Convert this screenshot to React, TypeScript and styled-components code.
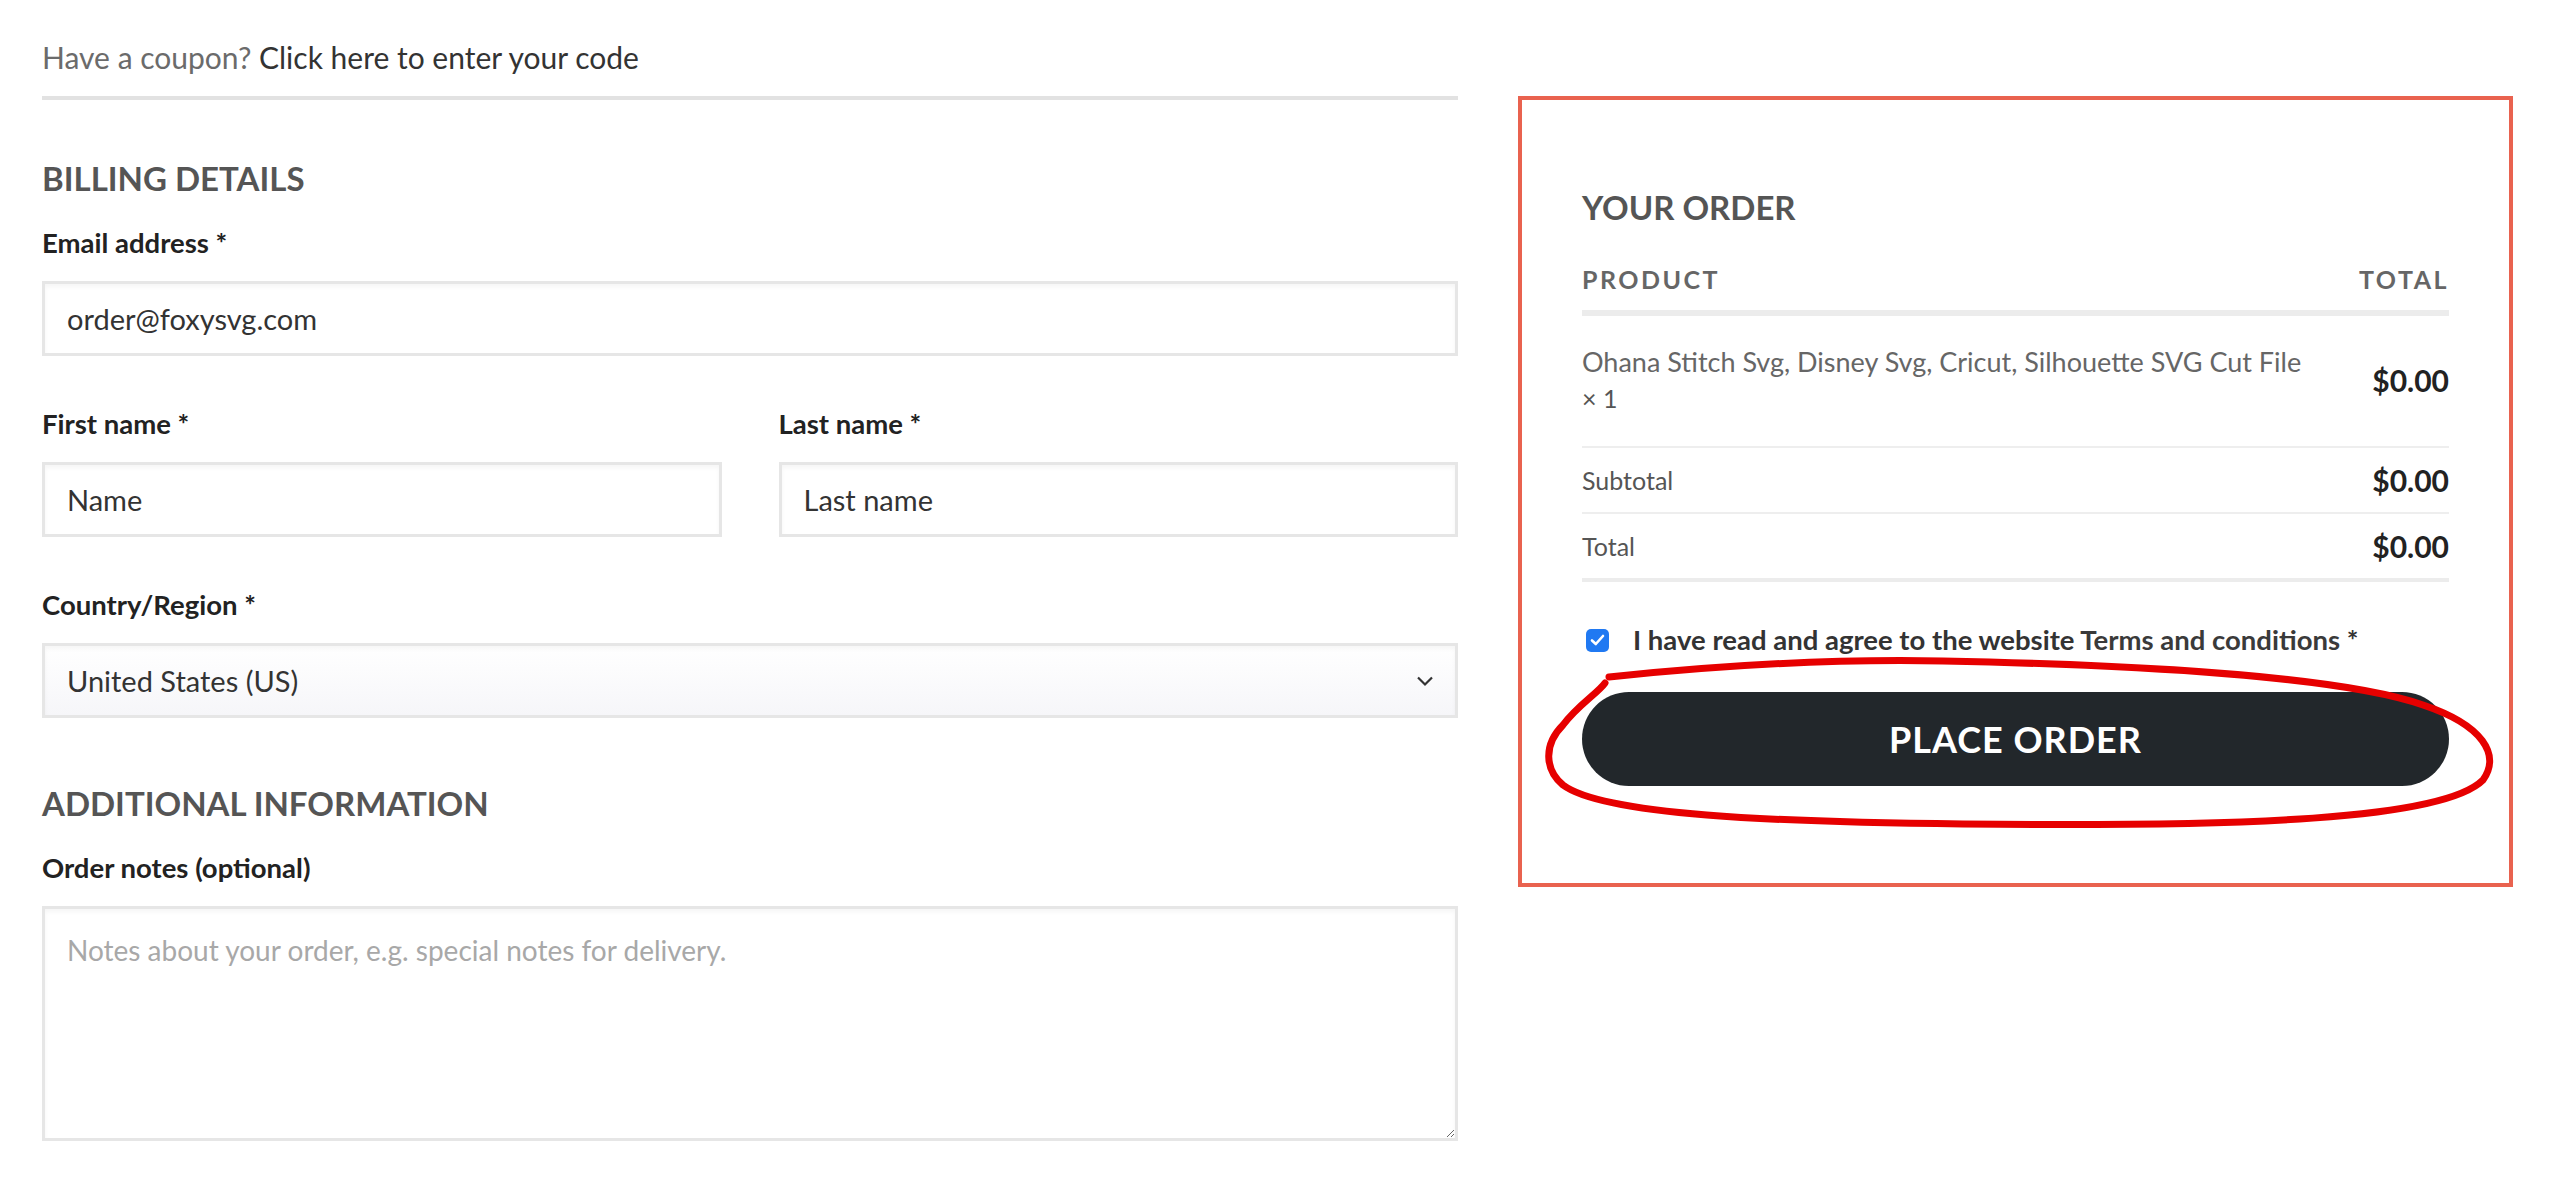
import React from "react";
import styled, { createGlobalStyle } from "styled-components";

const GlobalStyle = createGlobalStyle`
  * {
    box-sizing: border-box;
  }

  body {
    margin: 0;
    background: #fff;
    font-family: Lato, "Open Sans", sans-serif;
    color: #333;
  }
`;

const SPage = styled.div`
  display: flex;
  align-items: flex-start;
  gap: 60px;
  padding-left: 42px;
  width: 2560px;
`;

const SLeftColumn = styled.div`
  width: 1416px;
  display: flex;
  flex-direction: column;
`;

const SCoupon = styled.p`
  margin: 0 0 19px;
  padding-top: 37px;
  font-size: 30px;
  line-height: 40px;
  color: #6b6b6b;
`;

const SCouponLink = styled.a`
  color: #333;
  text-decoration: none;
`;

const SDivider = styled.div`
  height: 4px;
  background: #e2e2e2;
`;

const SSectionTitle = styled.h3<{ $top: number }>`
  margin: ${(p) => p.$top}px 0 27px;
  font-size: 33px;
  line-height: 40px;
  font-weight: 700;
  color: #555;
  text-transform: uppercase;
`;

const SField = styled.div<{ $last?: boolean }>`
  display: flex;
  flex-direction: column;
  margin-bottom: ${(p) => (p.$last ? 0 : 50)}px;
`;

const SLabel = styled.label`
  margin-bottom: 20px;
  font-size: 27.5px;
  line-height: 36px;
  font-weight: 700;
  color: #222;
`;

const fieldBox = `
  width: 100%;
  border: 3px solid #e6e6e6;
  border-radius: 0;
  box-shadow: inset 0 3px 4px rgba(0, 0, 0, 0.04);
  font-family: Lato, "Open Sans", sans-serif;
  font-size: 29px;
  color: #333;
  outline: none;
`;

const STextInput = styled.input`
  ${fieldBox}
  height: 75px;
  padding: 0 22px;
  background: #fff;
`;

const SNameRow = styled.div`
  display: grid;
  grid-template-columns: 1fr 1fr;
  column-gap: 57px;
`;

const SSelectWrap = styled.div`
  position: relative;
`;

const SSelect = styled.select`
  ${fieldBox}
  height: 75px;
  padding: 0 22px;
  appearance: none;
  background: linear-gradient(#ffffff, #f6f6f9);
`;

const SChevron = styled.svg`
  position: absolute;
  right: 24px;
  top: 50%;
  transform: translateY(-50%);
  pointer-events: none;
`;

const SNotes = styled.textarea`
  ${fieldBox}
  height: 235px;
  padding: 23px 22px;
  font-size: 28px;
  line-height: 36px;
  background: #fff;
  resize: vertical;

  &::placeholder {
    color: #a8a8a8;
  }
`;

const SOrderPanel = styled.div`
  width: 995px;
  margin-top: 96px;
  padding: 87px 60px 97px;
  border: 4px solid #e9624f;
`;

const SOrderTitle = styled.h3`
  margin: 0 0 24px;
  font-size: 33px;
  line-height: 40px;
  font-weight: 700;
  color: #555;
`;

const STable = styled.table`
  width: 100%;
  border-collapse: collapse;
`;

const SHeadCell = styled.th<{ $right?: boolean }>`
  padding: 13px 0 16px;
  border-bottom: 6px solid #ececec;
  font-size: 25px;
  line-height: 30px;
  font-weight: 700;
  letter-spacing: 2.5px;
  color: #666;
  text-align: ${(p) => (p.$right ? "right" : "left")};
`;

const SProductCell = styled.td`
  padding: 28px 40px 30px 0;
  border-bottom: 2px solid #eee;
  font-size: 27px;
  line-height: 36px;
  color: #666;
`;

const SQuantity = styled.span`
  display: block;
  font-size: 25px;
  color: #555;
`;

const SLabelCell = styled.td<{ $thick?: boolean }>`
  padding: 14px 0;
  border-bottom: ${(p) => (p.$thick ? "4px solid #ececec" : "2px solid #eee")};
  font-size: 25px;
  line-height: 36px;
  color: #555;
`;

const SPriceCell = styled.td<{ $thick?: boolean; $product?: boolean }>`
  padding: ${(p) => (p.$product ? "28px 0 30px" : "14px 0")};
  border-bottom: ${(p) => (p.$thick ? "4px solid #ececec" : "2px solid #eee")};
  font-size: 30px;
  line-height: 36px;
  font-weight: 700;
  color: #222;
  text-align: right;
  vertical-align: middle;
  white-space: nowrap;
`;

const STermsRow = styled.label`
  display: flex;
  align-items: center;
  gap: 24px;
  margin-top: 40px;
  padding-left: 4px;
  font-size: 27.5px;
  line-height: 36px;
  font-weight: 700;
  color: #333;
`;

const SCheckBox = styled.span`
  display: inline-flex;
  align-items: center;
  justify-content: center;
  width: 23px;
  height: 23px;
  border-radius: 5px;
  background: #2079f2;
  flex-shrink: 0;
`;

const STermsLink = styled.span`
  color: #3a3a3a;
`;

const SButtonWrap = styled.div`
  position: relative;
  margin-top: 34px;
`;

const SPlaceOrder = styled.button`
  display: block;
  width: 100%;
  height: 94px;
  border: none;
  border-radius: 47px;
  background: #22272b;
  color: #fff;
  font-family: Lato, "Open Sans", sans-serif;
  font-size: 36px;
  font-weight: 700;
  letter-spacing: 1px;
  cursor: pointer;
`;

const SScribble = styled.svg`
  position: absolute;
  left: -39px;
  top: -37px;
  pointer-events: none;
`;

export default function App() {
  return (
    <>
      <GlobalStyle />
      <SPage>
        <SLeftColumn>
          <SCoupon>
            Have a coupon? <SCouponLink href="#">Click here to enter your code</SCouponLink>
          </SCoupon>
          <SDivider />

          <SSectionTitle $top={58}>Billing details</SSectionTitle>
          <SField>
            <SLabel>Email address *</SLabel>
            <STextInput defaultValue="order@foxysvg.com" />
          </SField>
          <SNameRow>
            <SField>
              <SLabel>First name *</SLabel>
              <STextInput defaultValue="Name" />
            </SField>
            <SField>
              <SLabel>Last name *</SLabel>
              <STextInput defaultValue="Last name" />
            </SField>
          </SNameRow>
          <SField $last>
            <SLabel>Country/Region *</SLabel>
            <SSelectWrap>
              <SSelect defaultValue="US">
                <option value="US">United States (US)</option>
              </SSelect>
              <SChevron width="18" height="11" viewBox="0 0 18 11">
                <polyline points="2,2 9,9 16,2" fill="none" stroke="#333" strokeWidth="2.2" />
              </SChevron>
            </SSelectWrap>
          </SField>

          <SSectionTitle $top={65}>Additional information</SSectionTitle>
          <SField $last>
            <SLabel>Order notes (optional)</SLabel>
            <SNotes placeholder="Notes about your order, e.g. special notes for delivery." />
          </SField>
        </SLeftColumn>

        <SOrderPanel>
          <SOrderTitle>YOUR ORDER</SOrderTitle>
          <STable>
            <thead>
              <tr>
                <SHeadCell>PRODUCT</SHeadCell>
                <SHeadCell $right>TOTAL</SHeadCell>
              </tr>
            </thead>
            <tbody>
              <tr>
                <SProductCell>
                  Ohana Stitch Svg, Disney Svg, Cricut, Silhouette SVG Cut File
                  <SQuantity>× 1</SQuantity>
                </SProductCell>
                <SPriceCell $product>$0.00</SPriceCell>
              </tr>
            </tbody>
            <tfoot>
              <tr>
                <SLabelCell>Subtotal</SLabelCell>
                <SPriceCell>$0.00</SPriceCell>
              </tr>
              <tr>
                <SLabelCell $thick>Total</SLabelCell>
                <SPriceCell $thick>$0.00</SPriceCell>
              </tr>
            </tfoot>
          </STable>

          <STermsRow>
            <SCheckBox>
              <svg width="15" height="12" viewBox="0 0 15 12">
                <polyline points="2,6.5 5.8,10 13,2" fill="none" stroke="#fff" strokeWidth="2.6" strokeLinecap="round" strokeLinejoin="round" />
              </svg>
            </SCheckBox>
            <span>
              I have read and agree to the website <STermsLink>Terms and conditions</STermsLink> *
            </span>
          </STermsRow>

          <SButtonWrap>
            <SPlaceOrder>PLACE ORDER</SPlaceOrder>
            <SScribble width="960" height="176" viewBox="0 0 960 176">
              <path
                d="M66,22 C180,10 300,4 400,6 C600,10 800,22 880,50 C940,70 958,100 940,125 C900,165 700,172 420,169 C230,167 60,160 20,130 C2,115 0,90 20,70 C35,50 55,38 62,28"
                fill="none"
                stroke="#e60000"
                strokeWidth="7"
                strokeLinecap="round"
              />
            </SScribble>
          </SButtonWrap>
        </SOrderPanel>
      </SPage>
    </>
  );
}
